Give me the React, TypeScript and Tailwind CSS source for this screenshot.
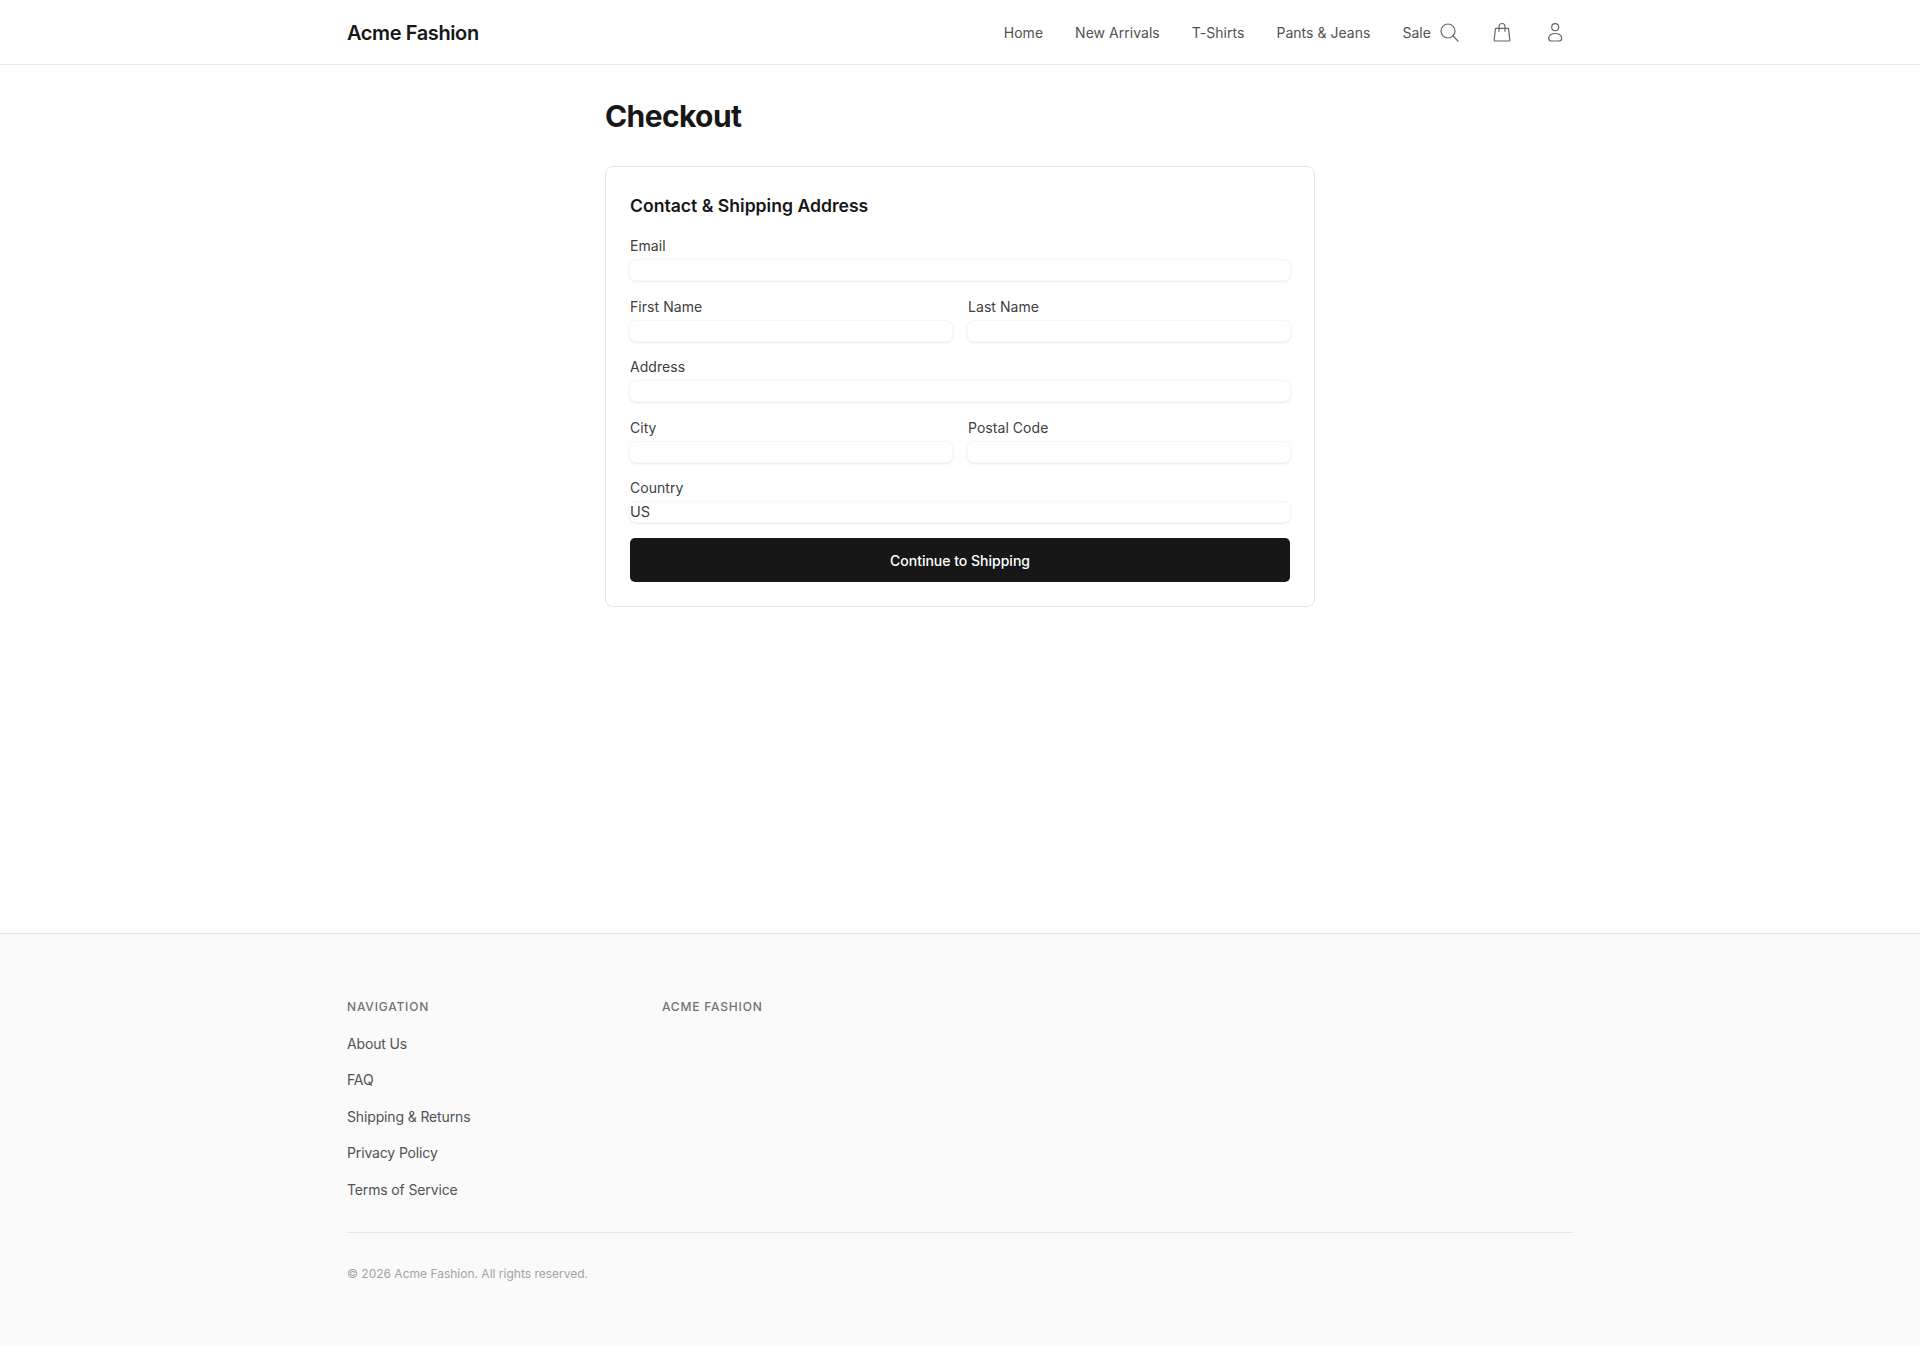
const navLinks = ['Home', 'New Arrivals', 'T-Shirts', 'Pants & Jeans', 'Sale'];
const footerLinks = ['About Us', 'FAQ', 'Shipping & Returns', 'Privacy Policy', 'Terms of Service'];

function Field({ label, value }: { label: string; value?: string }) {
  return (
    <div className="flex flex-col">
      <label className="text-[14px] leading-[20px] h-[20px] mb-[4px] text-[#404040] tracking-[0.05px]">{label}</label>
      <div className="h-[20px] rounded-[6px] bg-white shadow-[0_0_0_1px_#f7f7f7,0_1px_3px_rgba(0,0,0,0.18)] text-[14.5px] leading-[20px] text-[#404040]">
        {value}
      </div>
    </div>
  );
}

export default function App() {
  return (
    <div className="min-h-[1346px] flex flex-col bg-white font-['Inter',sans-serif]">
      <header className="h-[65px] border-b border-[#e8e8e8]">
        <div className="w-[1226px] mx-auto h-[64px] flex items-center justify-between">
          <span className="mt-[1px] text-[20px] font-semibold text-[#171717] tracking-[-0.4px]">Acme Fashion</span>
          <div className="flex items-center">
            <nav className="flex items-center gap-[32px] text-[14px] tracking-[0.03px] text-[#525252]">
              {navLinks.map((l) => (
                <a key={l}>{l}</a>
              ))}
            </nav>
            <div className="flex items-center gap-[29px] ml-[6px] mr-[6px] text-[#666666]">
              <svg className="w-[24px] h-[24px]" viewBox="0 0 24 24" fill="none" stroke="currentColor" strokeWidth="1.2" strokeLinecap="round">
                <circle cx="11" cy="11" r="7" />
                <path d="M16 16l5 5" />
              </svg>
              <svg className="w-[24px] h-[24px]" viewBox="0 0 24 24" fill="none" stroke="currentColor" strokeWidth="1.2" strokeLinejoin="round">
                <path d="M5.5 8.3h13l1.3 11.7a1 1 0 0 1-1 1H5.2a1 1 0 0 1-1-1z" />
                <path d="M9 11.7V6.5a3 3 0 0 1 6 0v5.2" />
              </svg>
              <svg className="w-[24px] h-[24px]" viewBox="0 0 24 24" fill="none" stroke="currentColor" strokeWidth="1.2">
                <circle cx="12.2" cy="7.2" r="3.5" />
                <path d="M12.2 13.5c-3.6 0-6.5 2-6.5 4.7 0 1.8 1.5 2.8 3 2.8h7c1.5 0 3-1 3-2.8 0-2.7-2.9-4.7-6.5-4.7z" />
              </svg>
            </div>
          </div>
        </div>
      </header>

      <main className="flex-1">
        <div className="w-[710px] mx-auto pt-[33px]">
          <h1 className="text-[30px] leading-[36px] font-bold text-[#171717] tracking-[-0.6px] mb-[32px]">Checkout</h1>
          <div className="border border-[#e5e5e5] rounded-[8px] px-[24px] pt-[25px] bg-white h-[441px]">
            <h2 className="text-[17.6px] leading-[28px] font-semibold text-[#171717] mb-[16px]">Contact &amp; Shipping Address</h2>
            <div className="flex flex-col gap-[16.5px]">
              <Field label="Email" />
              <div className="grid grid-cols-2 gap-[16px]">
                <Field label="First Name" />
                <Field label="Last Name" />
              </div>
              <Field label="Address" />
              <div className="grid grid-cols-2 gap-[16px]">
                <Field label="City" />
                <Field label="Postal Code" />
              </div>
              <Field label="Country" value="US" />
            </div>
            <button className="w-full h-[44px] mt-[16px] rounded-[5px] bg-[#171717] text-white text-[14px] font-medium">
              Continue to Shipping
            </button>
          </div>
        </div>
      </main>

      <footer className="h-[413px] bg-[#fafafa] border-t border-[#e5e5e5]">
        <div className="w-[1226px] mx-auto pt-[65px]">
          <div className="flex">
            <div className="w-[315px]">
              <h3 className="text-[12px] leading-[16px] font-medium text-[#737373] tracking-[0.8px] uppercase mb-[19px]">Navigation</h3>
              <ul className="flex flex-col gap-[16.4px]">
                {footerLinks.map((l) => (
                  <li key={l} className="text-[14px] leading-[20px] tracking-[-0.14px] text-[#525252]">{l}</li>
                ))}
              </ul>
            </div>
            <h3 className="text-[12px] leading-[16px] font-medium text-[#737373] tracking-[0.8px] uppercase">Acme Fashion</h3>
          </div>
          <div className="mt-[32px] border-t border-[#e5e5e5] pt-[33px]">
            <p className="text-[12px] leading-[16px] text-[#a3a3a3]">© 2026 Acme Fashion. All rights reserved.</p>
          </div>
        </div>
      </footer>
    </div>
  );
}
